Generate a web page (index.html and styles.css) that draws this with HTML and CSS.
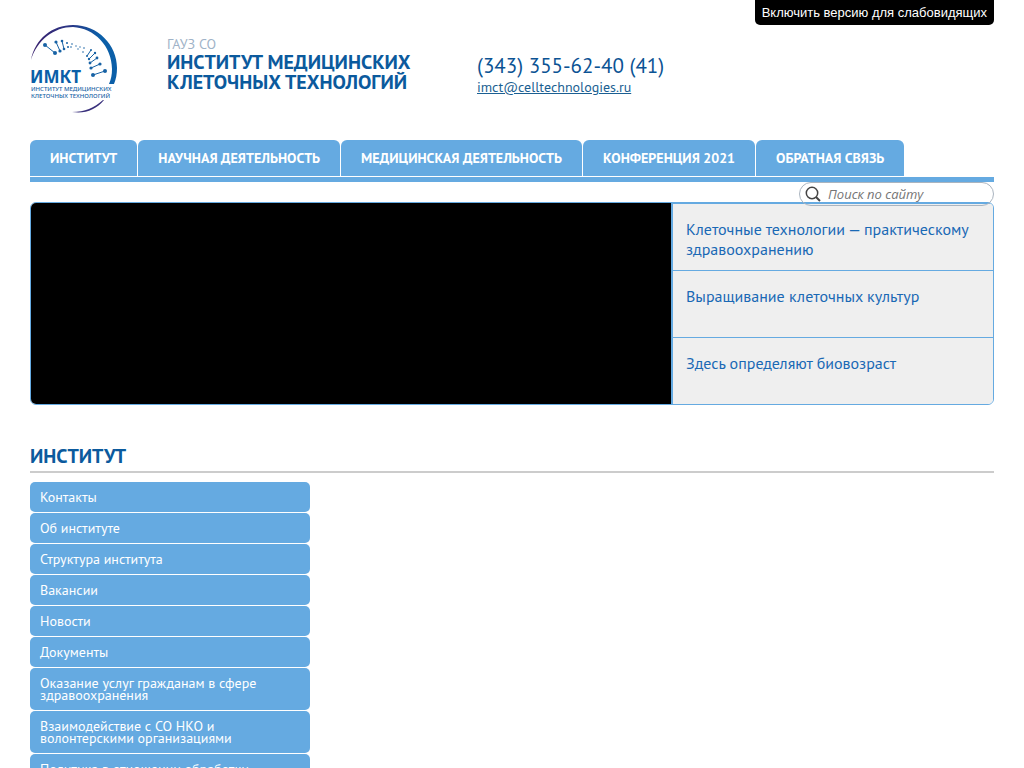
FILE: index.html
```html
<!DOCTYPE html>
<html lang="ru">
<head>
<meta charset="utf-8">
<meta name="viewport" content="width=device-width, initial-scale=1">
<title>Институт медицинских клеточных технологий</title>
<link rel="stylesheet" href="styles.css">
</head>
<body>
<button class="access" type="button">Включить версию для слабовидящих</button>
<div class="page">
  <header class="header">
    <a class="logo" href="#" aria-label="ИМКТ">
      <svg viewBox="0 0 90 90" width="90" height="90">
        <defs>
          <linearGradient id="ring" x1="0" y1="0" x2="1" y2="0">
            <stop offset="0" stop-color="#39206d"/>
            <stop offset="0.45" stop-color="#2a3585"/>
            <stop offset="0.8" stop-color="#0b5fa8"/>
          </linearGradient>
        </defs>
        <path fill="url(#ring)" d="M1 35C5 14 22 0 43 0c25 0 44 20 44 43 0 6-1 11-3 16h-5c2-5 3-9 3-15C82 21 64 3 43 2 24 2 7 15 1 35z"/>
        <path fill="#39307c" d="M73 75C64 83 55 87 42 87c13 2 24-2 32-12z"/>
        <path stroke="#1762a5" stroke-width="1" d="M15 20l10 8M26 17l4 9M32 16l2 8M57 31l4-6M59 34l6-6M60 38l7-5M61 43l9-4M63 50l12-4"/>
        <g fill="#1762a5">
          <circle cx="15" cy="20" r="2"/><circle cx="25" cy="28" r="2"/>
          <circle cx="26" cy="17" r="1.6"/><circle cx="30" cy="26" r="1.6"/>
          <circle cx="32" cy="16" r="1.3"/><circle cx="34" cy="24" r="1.3"/>
          <circle cx="37" cy="18" r="1"/><circle cx="38" cy="22" r="1"/>
          <circle cx="42" cy="19" r=".8"/><circle cx="41" cy="22" r=".8"/>
          <circle cx="46" cy="21" r=".7"/><circle cx="50" cy="22" r=".7"/>
          <circle cx="48" cy="24" r=".7"/><circle cx="54" cy="23" r=".8"/>
          <circle cx="53" cy="27" r=".8"/>
          <circle cx="57" cy="31" r="1"/><circle cx="61" cy="25" r="1"/>
          <circle cx="59" cy="34" r="1.2"/><circle cx="65" cy="28" r="1.2"/>
          <circle cx="60" cy="38" r="1.4"/><circle cx="67" cy="33" r="1.4"/>
          <circle cx="61" cy="43" r="1.6"/><circle cx="70" cy="39" r="1.6"/>
          <circle cx="63" cy="50" r="2"/><circle cx="75" cy="46" r="2"/>
        </g>
        <text class="logo-name" x="0" y="58">ИМКТ</text>
        <text class="logo-sub" x="1" y="66">ИНСТИТУТ МЕДИЦИНСКИХ</text>
        <text class="logo-sub" x="1" y="73">КЛЕТОЧНЫХ ТЕХНОЛОГИЙ</text>
      </svg>
    </a>
    <div class="brand">
      <p class="brand-type">ГАУЗ СО</p>
      <p class="brand-name">ИНСТИТУТ МЕДИЦИНСКИХ<br>КЛЕТОЧНЫХ ТЕХНОЛОГИЙ</p>
    </div>
    <div class="contacts">
      <p class="phone">(343) 355-62-40 (41)</p>
      <a class="mail" href="mailto:imct@celltechnologies.ru">imct@celltechnologies.ru</a>
    </div>
  </header>

  <nav class="nav">
    <a href="#">ИНСТИТУТ</a>
    <a href="#">НАУЧНАЯ ДЕЯТЕЛЬНОСТЬ</a>
    <a href="#">МЕДИЦИНСКАЯ ДЕЯТЕЛЬНОСТЬ</a>
    <a href="#">КОНФЕРЕНЦИЯ 2021</a>
    <a href="#">ОБРАТНАЯ СВЯЗЬ</a>
  </nav>

  <div class="stage">
    <form class="search" role="search">
      <svg viewBox="0 0 16 16" width="16" height="16" fill="none" stroke="#444">
        <circle cx="7" cy="7" r="5.7" stroke-width="1.5"/>
        <path d="M11 11l4 4" stroke-width="2"/>
      </svg>
      <input type="search" placeholder="Поиск по сайту" aria-label="Поиск по сайту">
    </form>
    <section class="slider">
      <div class="video"></div>
      <div class="topics">
        <a href="#">Клеточные технологии — практическому здравоохранению</a>
        <a href="#">Выращивание клеточных культур</a>
        <a href="#">Здесь определяют биовозраст</a>
      </div>
    </section>
  </div>

  <main>
    <h1 class="title">ИНСТИТУТ</h1>
    <nav class="side">
      <a href="#">Контакты</a>
      <a href="#">Об институте</a>
      <a href="#">Структура института</a>
      <a href="#">Вакансии</a>
      <a href="#">Новости</a>
      <a href="#">Документы</a>
      <a href="#">Оказание услуг гражданам в сфере здравоохранения</a>
      <a href="#">Взаимодействие с СО НКО и волонтерскими организациями</a>
      <a href="#">Политика в отношении обработки персональных данных</a>
    </nav>
  </main>
</div>
</body>
</html>
```

FILE: styles.css
```css
* { box-sizing: border-box; }

body {
  margin: 0;
  background: #fff;
  color: #0b5394;
  font-family: "PT Sans", "Noto Sans", sans-serif;
}

p, h1 { margin: 0; }

.page { padding: 25px 30px 30px; }

.access {
  position: absolute;
  top: 0;
  right: 30px;
  height: 25px;
  padding: 0 7px;
  border: 0;
  border-radius: 0 0 5px 5px;
  background: #000;
  color: #fff;
  font: 13px/25px "Liberation Sans", sans-serif;
}

.header {
  display: flex;
  align-items: flex-start;
  height: 115px;
}

.logo { width: 137px; }
.logo svg { display: block; }
.logo-name { font: 700 17px "Noto Sans", sans-serif; fill: #0b5fa8; }
.logo-sub { font: 500 6px "Noto Sans", sans-serif; fill: #1762a5; }

.brand { width: 310px; padding-top: 11px; }
.brand-type { color: #9fb3c8; font-size: 14px; line-height: 16px; }
.brand-name { color: #0b5a9d; font-size: 20px; font-weight: 700; line-height: 20px; }

.contacts { padding-top: 28px; }
.phone { font-size: 21px; line-height: 26px; }
.mail { display: block; color: #1b5f92; font-size: 14px; line-height: 16px; }

.nav {
  display: flex;
  gap: 1px;
  border-bottom: 5px solid #65aae1;
  padding-bottom: 1px;
}
.nav a {
  padding: 0 20px;
  border-radius: 6px 6px 0 0;
  background: #65aae1;
  color: #fff;
  font-size: 14px;
  font-weight: 700;
  line-height: 36px;
  text-decoration: none;
  white-space: nowrap;
}

.stage { position: relative; padding-top: 20px; }

.search {
  position: absolute;
  top: 0;
  right: 0;
  display: flex;
  align-items: center;
  gap: 7px;
  width: 195px;
  height: 24px;
  padding: 0 5px;
  border: 1px solid #aab4bf;
  border-radius: 12px;
}
.search svg { flex: none; }
.search input {
  flex: 1;
  min-width: 0;
  padding: 0;
  border: 0;
  outline: 0;
  background: none;
  font: italic 13px "Open Sans", sans-serif;
}
.search input::placeholder { color: #757575; }

.slider {
  display: grid;
  grid-template-columns: 1fr 322px;
  overflow: hidden;
  border: 1px solid #65aae1;
  border-radius: 6px;
}
.video { background: #000; }
.topics { border-left: 2px solid #65aae1; background: #efefef; }
.topics a {
  display: block;
  min-height: 67px;
  padding: 15px 13px 10px;
  border-top: 1px solid #65aae1;
  color: #1a69b5;
  font-size: 16px;
  line-height: 20px;
  text-decoration: none;
}

.title {
  margin-top: 38px;
  padding-bottom: 2px;
  border-bottom: 2px solid #ccc;
  color: #0b5a9d;
  font-size: 20px;
  line-height: 26px;
}

.side {
  display: flex;
  flex-direction: column;
  gap: 1px;
  width: 280px;
  margin-top: 9px;
}
.side a {
  padding: 9px 10px;
  border-radius: 5px;
  background: #65aae1;
  color: #fff;
  font-size: 14px;
  line-height: 12px;
  text-decoration: none;
}
```
